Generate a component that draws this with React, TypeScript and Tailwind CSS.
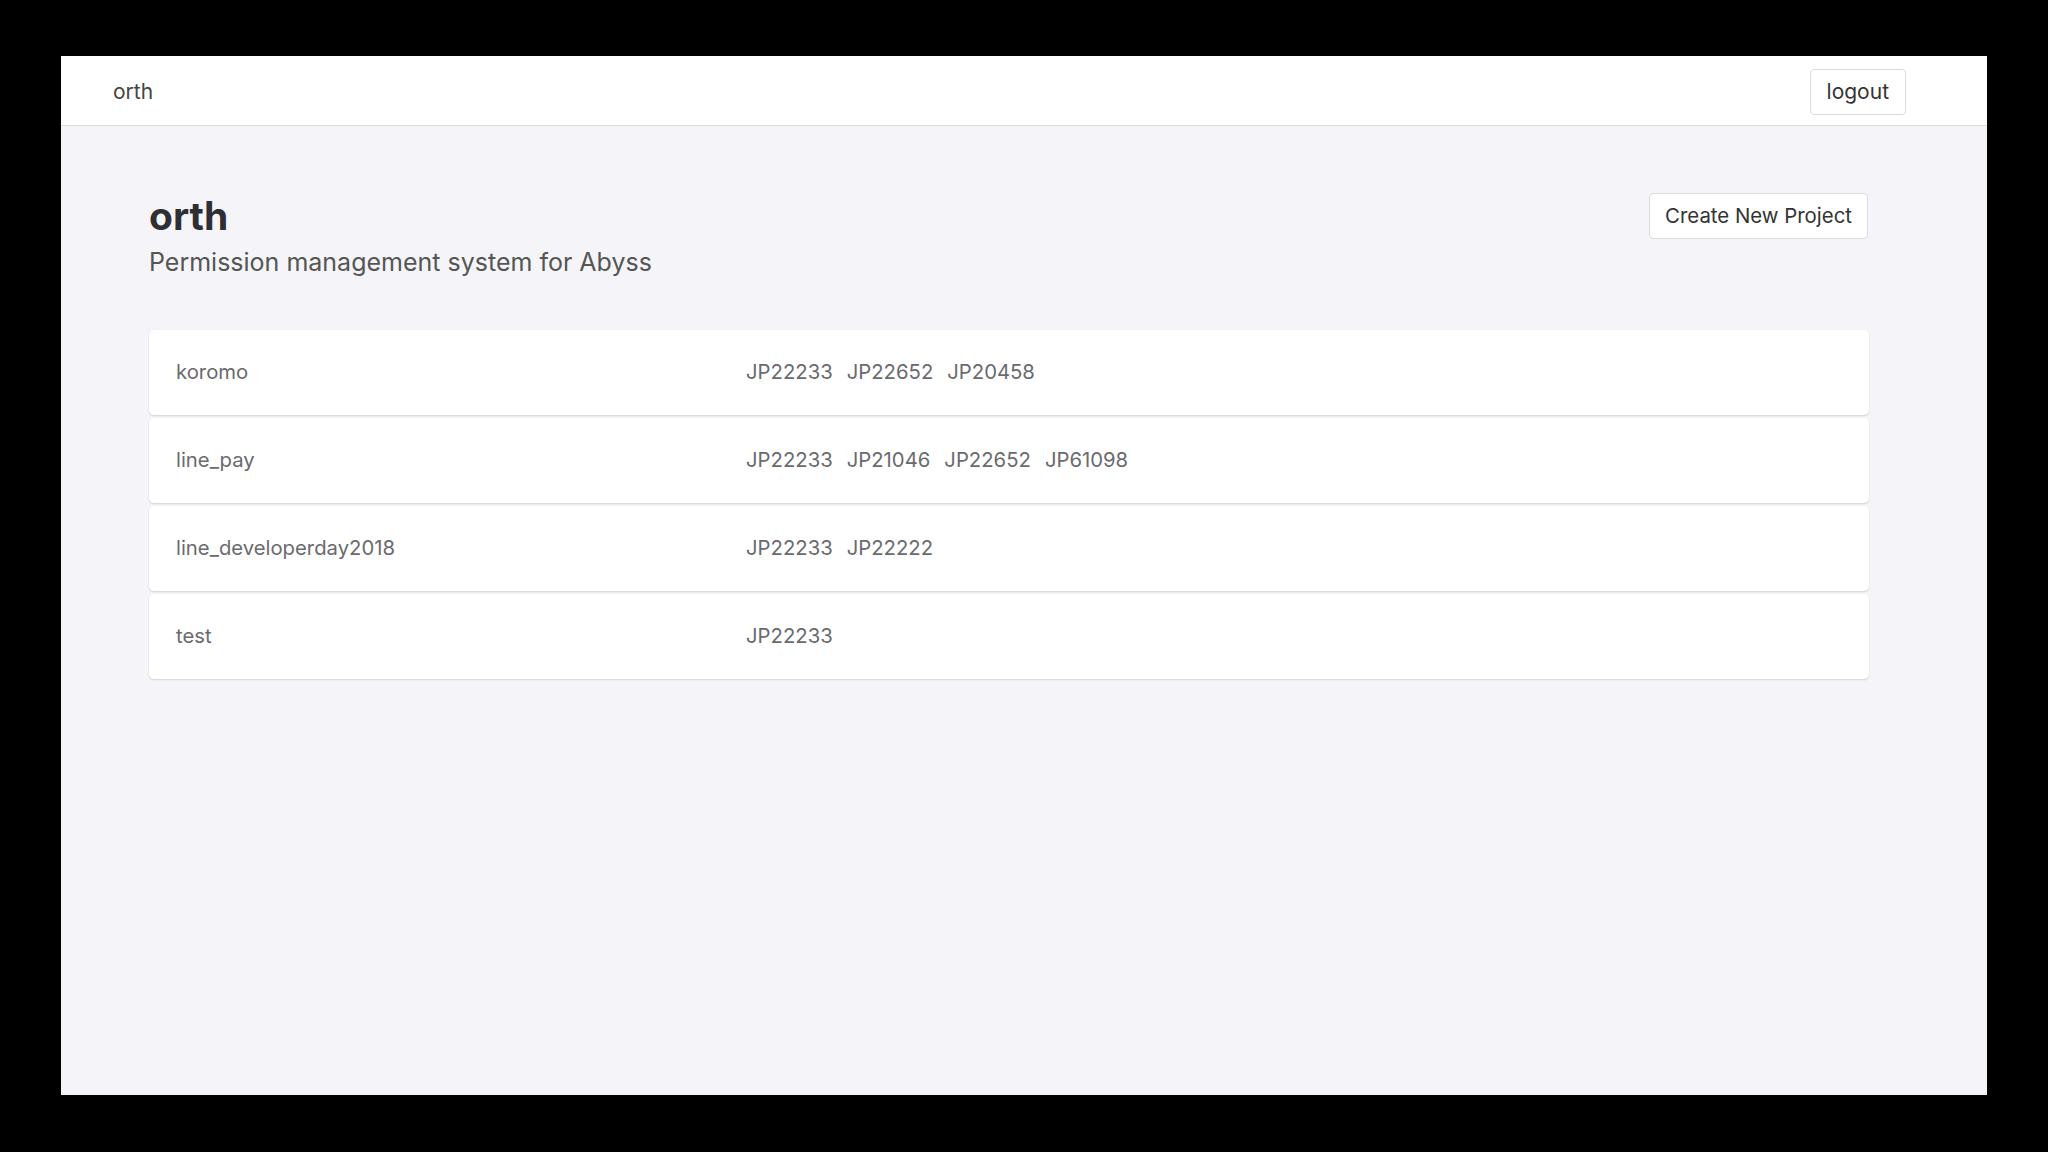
import React from "react";

export default function App() {
  const projects = [
    { name: "koromo", members: ["JP22233", "JP22652", "JP20458"] },
    { name: "line_pay", members: ["JP22233", "JP21046", "JP22652", "JP61098"] },
    { name: "line_developerday2018", members: ["JP22233", "JP22222"] },
    { name: "test", members: ["JP22233"] },
  ];

  return (
    <div className="w-full h-[1152px] bg-black pt-[56px] pl-[61px] font-['Inter','Liberation_Sans',sans-serif]">
      <div className="w-[1926px] h-[1039px] bg-[#f5f5f9] flex flex-col">
        {/* Navbar */}
        <div className="h-[70px] bg-white border-b border-[#d9d9dd] flex items-center justify-between pl-[52px] pr-[81px]">
          <span className="text-[21px] text-[#444] mt-[2px]">orth</span>
          <button className="h-[46px] px-[16px] mt-[2px] rounded-[4px] border border-[#dcdcdf] bg-white text-[21px] text-[#333]">
            logout
          </button>
        </div>

        <div className="w-[1720px] ml-[88px] flex flex-col">
          {/* Page header */}
          <div className="flex items-start justify-between pt-[66px]">
            <div className="flex flex-col">
              <h1 className="text-[39px] leading-[48px] font-bold text-[#2f2f33]">orth</h1>
              <p className="text-[25px] leading-[34px] mt-[5px] text-[#555]">Permission management system for Abyss</p>
            </div>
            <button className="h-[46px] px-[15px] mt-[1px] mr-[1px] rounded-[4px] border border-[#dcdcdf] bg-white text-[20.4px] text-[#333]">
              Create New Project
            </button>
          </div>

          {/* Project list */}
          <div className="mt-[51px] flex flex-col gap-[3px]">
            {projects.map((p) => (
              <div
                key={p.name}
                className="h-[85px] bg-white rounded-[5px] shadow-[0_1px_2px_rgba(0,0,0,0.14)] flex items-center pl-[27px] pr-[24px] text-[20.3px] text-[#6a6a6e]"
              >
                <span className="w-[570px] shrink-0">{p.name}</span>
                <div className="flex gap-[14px]">
                  {p.members.map((m) => (
                    <span key={m}>{m}</span>
                  ))}
                </div>
              </div>
            ))}
          </div>
        </div>
      </div>
    </div>
  );
}
